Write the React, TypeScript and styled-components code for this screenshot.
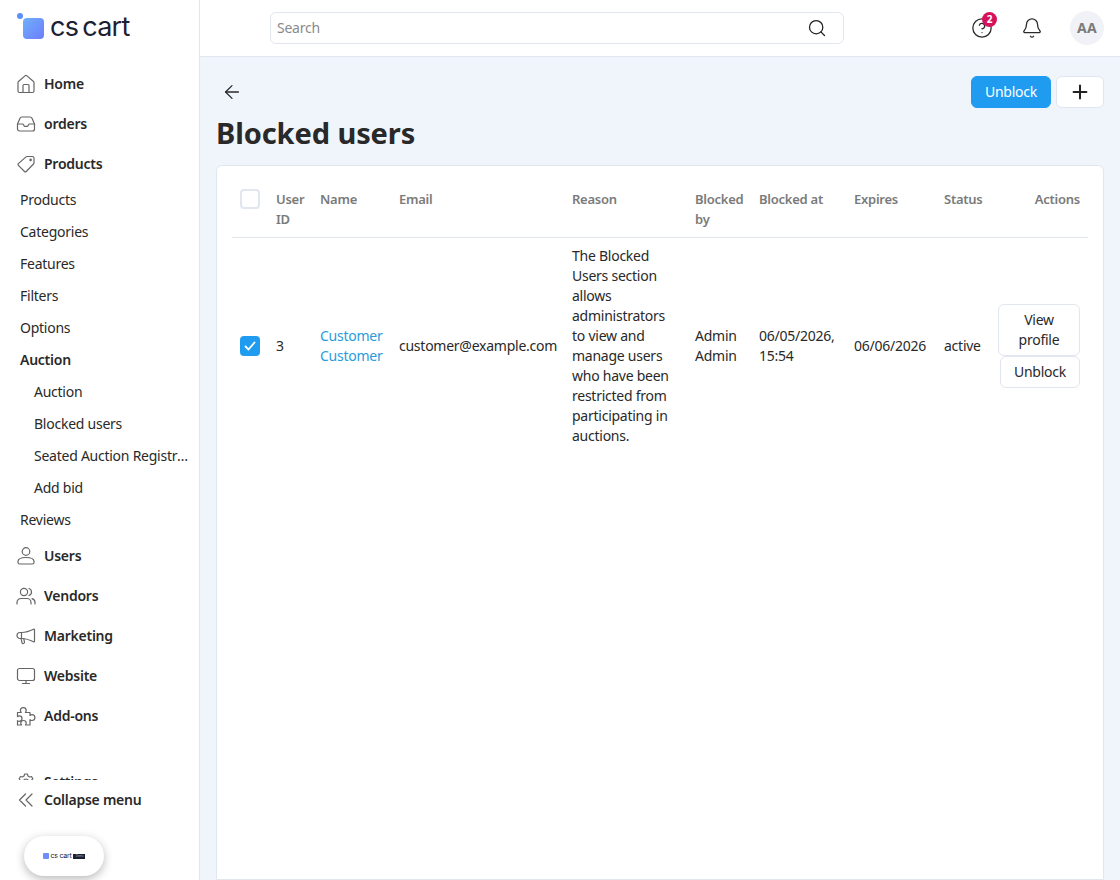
import type { ReactNode } from 'react';
import { createGlobalStyle, styled } from 'styled-components';
import { ArrowLeft, Bell, CircleHelp, Plus, Search } from 'lucide-react';

const GlobalStyle = createGlobalStyle`
	html, body {
		margin: 0;
		height: 100%;
		background: #f0f4fb;
	}
	body {
		font-family: "Noto Sans", "Open Sans", sans-serif;
		font-size: 14px;
		line-height: 20px;
		letter-spacing: -0.25px;
		color: #292929;
		overflow: hidden;
	}
	* {
		box-sizing: border-box;
	}
`;

const navIcons: Record<string, ReactNode> = {
	Home: (
		<>
			<path d="M2 8.6a1.5 1.5 0 0 1 .5-1.1L9 1.9a1.5 1.5 0 0 1 2 0l6.500 5.600a1.500 1.500 0 0 1 .5 1.100V17a1.500 1.500 0 0 1-1.500 1.500h-13A1.500 1.500 0 0 1 2 17Z" />
			<path d="M7 18.500V11.500a1 1 0 0 1 1-1h4a1 1 0 0 1 1 1v7" />
		</>
	),
	orders: (
		<>
			<path d="M1.500 10 4 4.200A2 2 0 0 1 5.800 3h8.400A2 2 0 0 1 16 4.200L18.500 10v5a2 2 0 0 1-2 2h-13a2 2 0 0 1-2-2Z" />
			<path d="M1.500 10h5c.5 0 .8.300 1 .7l.5 1c.2.400.6.600 1 .6h2c.4 0 .8-.2 1-.6l.5-1c.2-.4.5-.7 1-.7h5" />
		</>
	),
	Products: (
		<>
			<path d="M11 2.500h5.500A1.500 1.500 0 0 1 18 4v5a1.500 1.500 0 0 1-.5 1l-7.300 7.500a1.200 1.200 0 0 1-1.700 0l-6.100-6.200a1.200 1.200 0 0 1 0-1.700L10 2.900a1.500 1.500 0 0 1 1-.4Z" />
			<circle cx="14.600" cy="5.900" r=".7" />
		</>
	),
	Users: (
		<>
			<circle cx="10" cy="5.500" r="3.800" />
			<path d="M2 15.500c0-2.500 3-4 8-4s8 1.500 8 4v1a1.500 1.500 0 0 1-1.500 1.500h-13A1.500 1.500 0 0 1 2 16.500Z" />
		</>
	),
	Vendors: (
		<>
			<circle cx="8" cy="6" r="3.600" />
			<path d="M1 18v-1.500a4 4 0 0 1 4-4h6a4 4 0 0 1 4 4V18" />
			<path d="M13 2.500a3.700 3.700 0 0 1 0 7" />
			<path d="M16 12.700a4 4 0 0 1 3 3.800V18" />
		</>
	),
	Marketing: (
		<>
			<path d="M18 3c-4 2-8 3.500-12.500 3.500H4a3 3 0 0 0 0 6h1.500c4.500 0 8.500 1.500 12.500 3.500a.8.8 0 0 0 .5-.7V3.700A.8.8 0 0 0 18 3Z" />
			<path d="M5.500 6.500v6" />
			<path d="m5 12.500 1 4.200a1.300 1.300 0 0 0 2.500-.6l-.7-3.200" />
		</>
	),
	Website: (
		<>
			<rect x="1.500" y="2.500" width="17" height="12" rx="2" />
			<path d="M10 14.500v3M6.500 17.500h7" />
		</>
	),
	'Add-ons': (
		<path d="M1.500 6.500h3.700c-.6-.7-.8-1.300-.8-2a2.900 2.900 0 0 1 5.800 0c0 .7-.2 1.300-.8 2H14v3c.7-.6 1.300-.8 2-.8a2.900 2.900 0 0 1 0 5.800c-.7 0-1.300-.2-2-.8V19H9.500c.5-.6.7-1.200.7-1.800a2.700 2.700 0 0 0-5.400 0c0 .6.200 1.200.7 1.800H1.500v-4.400c.6.500 1.200.7 1.800.7a2.700 2.700 0 0 0 0-5.400c-.6 0-1.200.2-1.800.7Z" />
	),
	Settings: (
		<>
			<path d="M4.500 4.500 6.500 5l1.500-1L8.700 2h2.600l.7 2 1.500 1 2-.5 1.300 2.300-1.400 1.500v1.400l1.400 1.500-1.300 2.300-2-.5-1.500 1-.7 2H8.700L8 15l-1.500-1-2 .5-1.300-2.300 1.400-1.500V9.300L3.200 6.800Z" />
			<circle cx="10" cy="9.500" r="2.500" />
		</>
	),
};

const topItems = ['Home', 'orders', 'Products'];
const bottomItems = ['Users', 'Vendors', 'Marketing', 'Website', 'Add-ons'];

const columns = [36, 44, 79, 173, 123, 64, 95, 90, 54, 98];

const NavRow = ({ label }: { label: string }) => (
	<NavLink>
		<NavSvg viewBox="0 0 20 20">{navIcons[label]}</NavSvg>
		<span>{label}</span>
	</NavLink>
);

export default function App() {
	return (
		<Page>
			<GlobalStyle />
			<Sidebar>
				<Logo>
					<LogoMark>
						<LogoDot />
						<LogoSquare />
					</LogoMark>
					<LogoText>cs cart</LogoText>
				</Logo>
				<Nav>
					{topItems.map((label) => (
						<NavRow key={label} label={label} />
					))}
					<SubLink>Products</SubLink>
					<SubLink>Categories</SubLink>
					<SubLink>Features</SubLink>
					<SubLink>Filters</SubLink>
					<SubLink>Options</SubLink>
					<SubLink $active>Auction</SubLink>
					<SubLink $nested>Auction</SubLink>
					<SubLink $nested>Blocked users</SubLink>
					<SubLink $nested>Seated Auction Registrations</SubLink>
					<SubLink $nested>Add bid</SubLink>
					<SubLink>Reviews</SubLink>
					{bottomItems.map((label) => (
						<NavRow key={label} label={label} />
					))}
					<NavGap />
					<NavRow label="Settings" />
				</Nav>
				<CollapseRow>
					<NavSvg viewBox="0 0 20 20">
						<path d="M9.500 4 3.500 10l6 6M16 4l-6 6 6 6" />
					</NavSvg>
					<span>Collapse menu</span>
				</CollapseRow>
				<Pill>
					<PillMark />
					<PillText>cs cart</PillText>
					<PillBadge>Demo</PillBadge>
				</Pill>
			</Sidebar>
			<Content>
				<Header>
					<SearchBox>
						<SearchInput placeholder="Search" />
						<Search size={20} strokeWidth={1.5} color="#1f1f1f" />
					</SearchBox>
					<HeaderIcons>
						<HelpWrap>
							<CircleHelp size={22} strokeWidth={1.4} />
							<Badge>2</Badge>
						</HelpWrap>
						<Bell size={22} strokeWidth={1.4} />
						<Avatar>AA</Avatar>
					</HeaderIcons>
				</Header>
				<Main>
					<TopRow>
						<BackButton>
							<ArrowLeft size={22} strokeWidth={1.4} />
						</BackButton>
						<TopActions>
							<PrimaryButton>Unblock</PrimaryButton>
							<IconButton>
								<Plus size={22} strokeWidth={2.2} />
							</IconButton>
						</TopActions>
					</TopRow>
					<Title>Blocked users</Title>
					<Card>
						<Table>
							<colgroup>
								{columns.map((width, index) => (
									<col key={index} width={width} />
								))}
							</colgroup>
							<thead>
								<tr>
									<Th>
										<Checkbox />
									</Th>
									<Th>User ID</Th>
									<Th>Name</Th>
									<Th>Email</Th>
									<Th>Reason</Th>
									<Th>Blocked by</Th>
									<Th>Blocked at</Th>
									<Th>Expires</Th>
									<Th>Status</Th>
									<ActionsTh>Actions</ActionsTh>
								</tr>
							</thead>
							<tbody>
								<tr>
									<Td>
										<Checkbox $checked>
											<svg width="14" height="14" viewBox="0 0 14 14" fill="none">
												<path
													d="M2.5 7.5l3 3 6-7"
													stroke="#fff"
													strokeWidth="1.8"
													strokeLinecap="round"
													strokeLinejoin="round"
												/>
											</svg>
										</Checkbox>
									</Td>
									<Td>3</Td>
									<Td>
										<CustomerLink>Customer Customer</CustomerLink>
									</Td>
									<Td>customer@example.com</Td>
									<Td>
										The Blocked Users section allows administrators to view and manage users who
										have been restricted from participating in auctions.
									</Td>
									<Td>Admin Admin</Td>
									<Td>06/05/2026, 15:54</Td>
									<Td>06/06/2026</Td>
									<Td>active</Td>
									<ActionsTd>
										<RowActions>
											<OutlineButton $width={82}>View profile</OutlineButton>
											<OutlineButton $width={80}>Unblock</OutlineButton>
										</RowActions>
									</ActionsTd>
								</tr>
							</tbody>
						</Table>
					</Card>
				</Main>
			</Content>
		</Page>
	);
}

const Page = styled.div`
	display: flex;
	width: 100%;
	height: 100vh;
	overflow: hidden;
`;

const Sidebar = styled.aside`
	display: flex;
	flex-direction: column;
	flex: 0 0 200px;
	width: 200px;
	min-width: 0;
	height: 100%;
	background: #fff;
	border-right: 1px solid #e2e6ee;
`;

const Logo = styled.div`
	display: flex;
	align-items: center;
	gap: 5px;
	height: 64px;
	padding: 0 0 10px 17px;
	flex-shrink: 0;
`;

const LogoMark = styled.div`
	position: relative;
	width: 28px;
	height: 28px;
`;

const LogoDot = styled.span`
	position: absolute;
	top: 0;
	left: 0;
	width: 6px;
	height: 6px;
	border-radius: 50%;
	background: #5b8ff9;
`;

const LogoSquare = styled.span`
	position: absolute;
	top: 5px;
	left: 6px;
	width: 21px;
	height: 21px;
	border-radius: 4px;
	background: linear-gradient(135deg, #6fb0fb 0%, #6d7dfb 100%);
`;

const LogoText = styled.span`
	font-family: Inter, sans-serif;
	font-size: 27px;
	line-height: 28px;
	font-weight: 400;
	letter-spacing: -0.7px;
	word-spacing: -3px;
	color: #1c2033;
`;

const Nav = styled.nav`
	display: flex;
	flex-direction: column;
	flex: 0 0 716px;
	overflow: hidden;
`;

const NavSvg = styled.svg`
	flex-shrink: 0;
	width: 20px;
	height: 20px;
	fill: none;
	stroke: #666;
	stroke-width: 1.2;
	stroke-linecap: round;
	stroke-linejoin: round;
`;

const NavLink = styled.a`
	display: flex;
	align-items: center;
	gap: 8px;
	flex: 0 0 40px;
	padding-left: 16px;
	font-weight: 600;
	color: #292929;
`;

const NavGap = styled.div`
	flex: 0 0 26px;
`;

const SubLink = styled.a<{ $active?: boolean; $nested?: boolean }>`
	display: block;
	flex: 0 0 32px;
	padding-left: ${({ $nested }) => ($nested ? 34 : 20)}px;
	padding-right: 6px;
	line-height: 32px;
	font-weight: ${({ $active }) => ($active ? 600 : 400)};
	color: #292929;
	white-space: nowrap;
	overflow: hidden;
	text-overflow: ellipsis;
`;

const CollapseRow = styled.div`
	display: flex;
	align-items: center;
	gap: 8px;
	flex: 0 0 40px;
	padding-left: 16px;
	font-weight: 600;
`;

const Pill = styled.div`
	display: flex;
	align-items: center;
	justify-content: center;
	gap: 2px;
	flex: 0 0 40px;
	width: 80px;
	margin: 16px 0 0 24px;
	border-radius: 20px;
	background: #fff;
	box-shadow: 0 3px 10px rgba(0, 0, 0, 0.28);
`;

const PillMark = styled.span`
	width: 6px;
	height: 6px;
	border-radius: 1px;
	background: #6d8dfb;
`;

const PillText = styled.span`
	font-family: Inter, sans-serif;
	font-size: 7px;
	line-height: 10px;
	color: #1c2033;
`;

const PillBadge = styled.span`
	width: 12px;
	height: 5px;
	overflow: hidden;
	font-size: 3px;
	line-height: 5px;
	text-align: center;
	color: #aab;
	background: #1c2033;
`;

const Content = styled.div`
	display: flex;
	flex-direction: column;
	flex: 1;
	min-width: 0;
`;

const Header = styled.header`
	display: flex;
	align-items: center;
	justify-content: space-between;
	flex: 0 0 57px;
	padding: 0 16px 0 70px;
	background: #fff;
	border-bottom: 1px solid #e2e6ee;
`;

const SearchBox = styled.div`
	display: flex;
	align-items: center;
	justify-content: space-between;
	width: 574px;
	height: 32px;
	padding: 0 16px 0 6px;
	border: 1px solid #e2e6ee;
	border-radius: 6px;
`;

const SearchInput = styled.input`
	flex: 1;
	border: 0;
	outline: 0;
	padding: 0;
	font: inherit;
	letter-spacing: inherit;
	background: transparent;

	&::placeholder {
		color: #8a8a8a;
	}
`;

const HeaderIcons = styled.div`
	display: flex;
	align-items: center;
	gap: 28px;
	color: #292929;
`;

const HelpWrap = styled.div`
	position: relative;
	display: flex;
`;

const Badge = styled.span`
	position: absolute;
	top: -5px;
	right: -4px;
	width: 15px;
	height: 15px;
	border-radius: 50%;
	background: #d6115b;
	color: #fff;
	font-size: 10px;
	font-weight: 700;
	line-height: 15px;
	text-align: center;
`;

const Avatar = styled.div`
	width: 34px;
	height: 34px;
	margin-left: -1px;
	border-radius: 50%;
	background: #f0f2f8;
	color: #7a7a7a;
	font-size: 14px;
	font-weight: 700;
	letter-spacing: 0.3px;
	line-height: 34px;
	text-align: center;
`;

const Main = styled.main`
	display: flex;
	flex-direction: column;
	flex: 1;
	min-height: 0;
	padding: 19px 16px 0;
`;

const TopRow = styled.div`
	display: flex;
	align-items: center;
	justify-content: space-between;
	height: 32px;
`;

const BackButton = styled.div`
	display: flex;
	padding-left: 5px;
	color: #292929;
`;

const TopActions = styled.div`
	display: flex;
	gap: 5px;
`;

const PrimaryButton = styled.button`
	width: 80px;
	height: 32px;
	padding: 0;
	border: 1px solid #1f9cf0;
	border-radius: 6px;
	background: #1f9cf0;
	color: #fff;
	font: inherit;
	letter-spacing: inherit;
`;

const IconButton = styled.button`
	display: flex;
	align-items: center;
	justify-content: center;
	width: 48px;
	height: 32px;
	padding: 0;
	border: 1px solid #e2e6ee;
	border-radius: 6px;
	background: #fff;
	color: #222;
`;

const Title = styled.h1`
	margin: 7px 0 14px;
	font-size: 29px;
	line-height: 36px;
	font-weight: 700;
	letter-spacing: -0.1px;
	color: #292929;
`;

const Card = styled.section`
	flex: 1;
	padding: 15px 15px 0;
	background: #fff;
	border: 1px solid #e2e6ee;
	border-radius: 6px 6px 0 0;
`;

const Table = styled.table`
	width: 856px;
	table-layout: fixed;
	border-collapse: collapse;
`;

const Th = styled.th`
	padding: 8px;
	text-align: left;
	vertical-align: top;
	font-size: 13px;
	font-weight: 600;
	color: #7a7a7a;
	border-bottom: 1px solid #e2e6ee;
`;

const ActionsTh = styled(Th)`
	text-align: right;
`;

const Td = styled.td`
	padding: 8px;
	vertical-align: middle;
`;

const ActionsTd = styled(Td)`
	padding-left: 0;
`;

const Checkbox = styled.span<{ $checked?: boolean }>`
	display: flex;
	align-items: center;
	justify-content: center;
	width: 20px;
	height: 20px;
	border-radius: 4px;
	border: ${({ $checked }) => ($checked ? '0' : '2px solid #e2e6ee')};
	background: ${({ $checked }) => ($checked ? '#1f9cf0' : '#fff')};
`;

const CustomerLink = styled.a`
	color: #2a9bdc;
`;

const RowActions = styled.div`
	display: flex;
	flex-direction: column;
	align-items: flex-end;
`;

const OutlineButton = styled.button<{ $width: number }>`
	width: ${({ $width }) => $width}px;
	padding: 5px 12px;
	border: 1px solid #e2e6ee;
	border-radius: 6px;
	background: #fff;
	color: #292929;
	font: inherit;
	letter-spacing: inherit;
`;
